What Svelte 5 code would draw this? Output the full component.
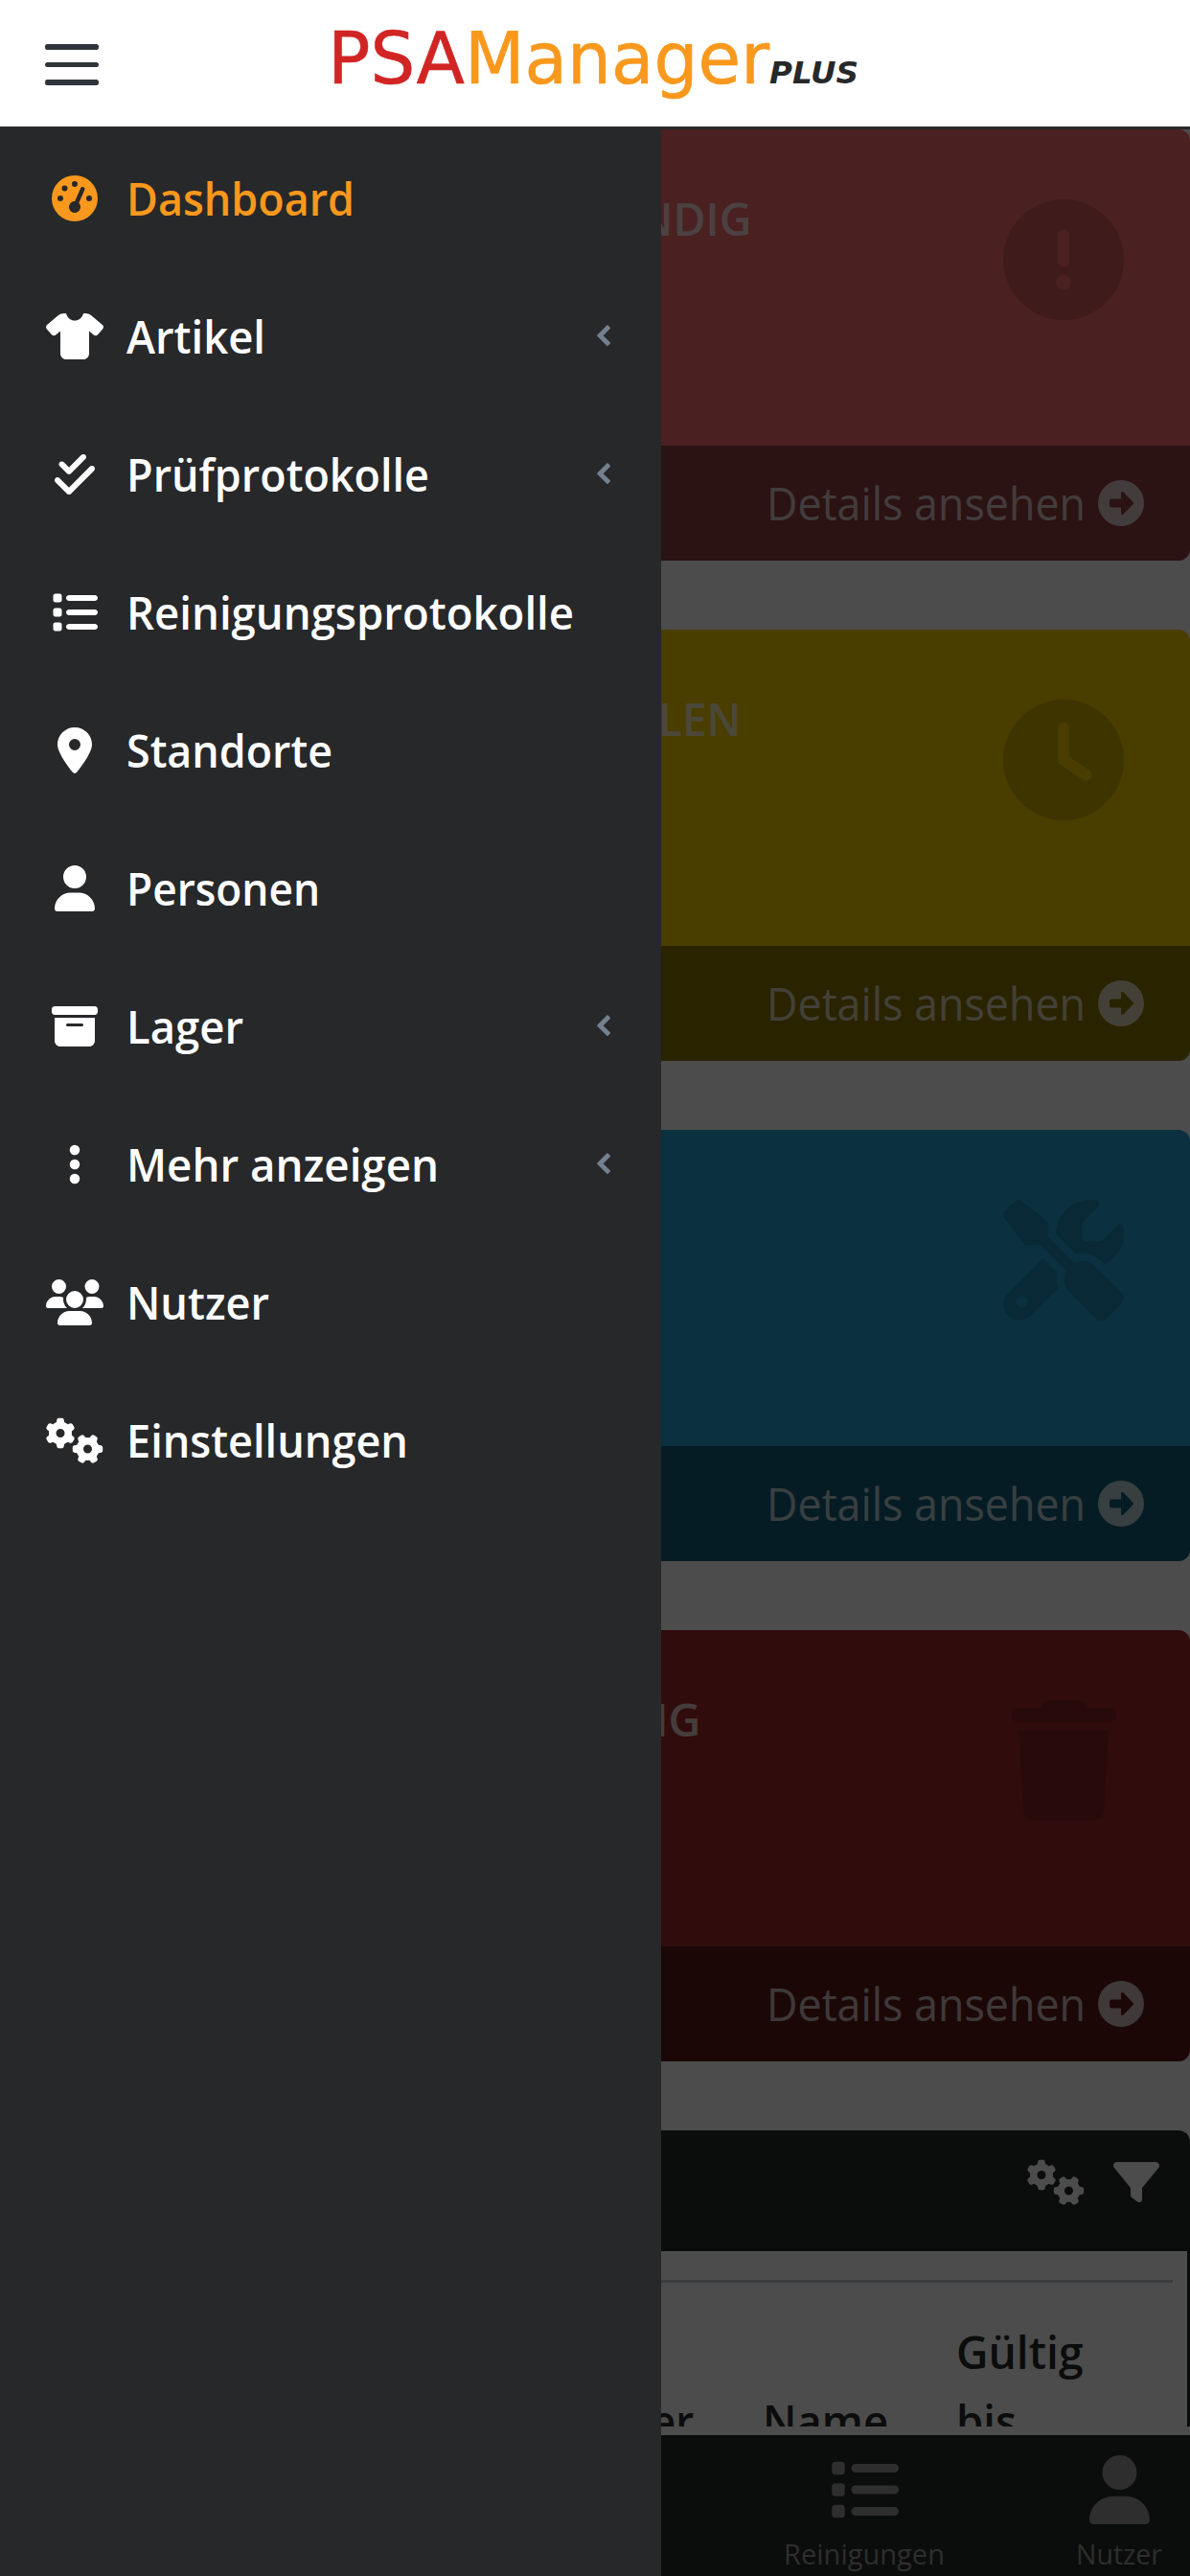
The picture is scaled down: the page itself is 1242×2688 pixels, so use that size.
<script lang="ts">
  interface NavItem {
    label: string;
    icon: string;
    width: number;
    active?: boolean;
    children?: boolean;
  }

  // [viewBox width, path], every icon is 512 units high
  const icons: Record<string, [number, string]> = {
    gauge: [512, 'M0 256a256 256 0 1 1 512 0A256 256 0 1 1 0 256zM288 96a32 32 0 1 0 -64 0 32 32 0 1 0 64 0zM256 416c35.3 0 64-28.7 64-64c0-17.4-6.9-33.1-18.1-44.6L366 161.7c5.3-12.1-.2-26.3-12.3-31.6s-26.3 .2-31.6 12.3L257.9 288c-.6 0-1.3 0-1.9 0c-35.3 0-64 28.7-64 64s28.7 64 64 64zM176 144a32 32 0 1 0 -64 0 32 32 0 1 0 64 0zM96 288a32 32 0 1 0 0-64 32 32 0 1 0 0 64zm352-32a32 32 0 1 0 -64 0 32 32 0 1 0 64 0z'],
    shirt: [640, 'M211.8 0c7.8 0 14.3 5.7 16.7 13.2C240.8 51.9 277.1 80 320 80s79.2-28.1 91.5-66.8C413.9 5.7 420.4 0 428.2 0h12.6c22.5 0 44.2 7.9 61.5 22.3L628.5 127.4c6.6 5.5 10.7 13.5 11.4 22.1s-2.1 17.1-7.8 23.6l-56 64c-11.4 13.1-31.2 14.6-44.6 3.5L480 197.7V448c0 35.3-28.7 64-64 64H224c-35.3 0-64-28.7-64-64V197.7l-51.5 42.9c-13.3 11.1-33.1 9.6-44.6-3.5l-56-64c-5.7-6.5-8.5-15-7.8-23.6s4.8-16.6 11.4-22.1L137.7 22.3C155 7.9 176.7 0 199.2 0h12.6z'],
    checkDouble: [448, 'M342.6 86.6c12.5-12.5 12.5-32.8 0-45.3s-32.8-12.5-45.3 0L160 178.7l-57.4-57.4c-12.5-12.5-32.8-12.5-45.3 0s-12.5 32.8 0 45.3l80 80c12.5 12.5 32.8 12.5 45.3 0l160-160zm96 128c12.5-12.5 12.5-32.8 0-45.3s-32.8-12.5-45.3 0L160 402.7 54.6 297.4c-12.5-12.5-32.8-12.5-45.3 0s-12.5 32.8 0 45.3l128 128c12.5 12.5 32.8 12.5 45.3 0l256-256z'],
    list: [512, 'M40 48C26.7 48 16 58.7 16 72v48c0 13.3 10.7 24 24 24H88c13.3 0 24-10.7 24-24V72c0-13.3-10.7-24-24-24H40zM192 64c-17.7 0-32 14.3-32 32s14.3 32 32 32H480c17.7 0 32-14.3 32-32s-14.3-32-32-32H192zm0 160c-17.7 0-32 14.3-32 32s14.3 32 32 32H480c17.7 0 32-14.3 32-32s-14.3-32-32-32H192zm0 160c-17.7 0-32 14.3-32 32s14.3 32 32 32H480c17.7 0 32-14.3 32-32s-14.3-32-32-32H192zM16 232v48c0 13.3 10.7 24 24 24H88c13.3 0 24-10.7 24-24V232c0-13.3-10.7-24-24-24H40c-13.3 0-24 10.7-24 24zM40 368c-13.3 0-24 10.7-24 24v48c0 13.3 10.7 24 24 24H88c13.3 0 24-10.7 24-24V392c0-13.3-10.7-24-24-24H40z'],
    location: [384, 'M215.7 499.2C267 435 384 279.4 384 192C384 86 298 0 192 0S0 86 0 192c0 87.4 117 243 168.3 307.2c12.3 15.3 35.1 15.3 47.4 0zM192 128a64 64 0 1 1 0 128 64 64 0 1 1 0-128z'],
    user: [448, 'M224 256A128 128 0 1 0 224 0a128 128 0 1 0 0 256zm-45.7 48C79.8 304 0 383.8 0 482.3C0 498.7 13.3 512 29.7 512H418.3c16.4 0 29.7-13.3 29.7-29.7C448 383.8 368.2 304 269.7 304H178.3z'],
    archive: [512, 'M32 32H480c17.7 0 32 14.3 32 32V96c0 17.7-14.3 32-32 32H32C14.3 128 0 113.7 0 96V64C0 46.3 14.3 32 32 32zm0 128H480V416c0 35.3-28.7 64-64 64H96c-35.3 0-64-28.7-64-64V160zm128 80c0 8.8 7.2 16 16 16H336c8.8 0 16-7.2 16-16s-7.2-16-16-16H176c-8.8 0-16 7.2-16 16z'],
    ellipsis: [128, 'M64 360a56 56 0 1 0 0 112 56 56 0 1 0 0-112zm0-160a56 56 0 1 0 0 112 56 56 0 1 0 0-112zM120 96A56 56 0 1 0 8 96a56 56 0 1 0 112 0z'],
    users: [640, 'M144 0a80 80 0 1 1 0 160A80 80 0 1 1 144 0zM512 0a80 80 0 1 1 0 160A80 80 0 1 1 512 0zM0 298.7C0 239.8 47.8 192 106.7 192h42.7c15.9 0 31 3.5 44.6 9.7c-1.3 7.2-1.9 14.7-1.9 22.3c0 38.2 16.8 72.5 43.3 96c-.2 0-.4 0-.7 0H21.3C9.6 320 0 310.4 0 298.7zM405.3 320c-.2 0-.4 0-.7 0c26.6-23.5 43.3-57.8 43.3-96c0-7.6-.7-15-1.9-22.3c13.6-6.3 28.7-9.7 44.6-9.7h42.7C592.2 192 640 239.8 640 298.7c0 11.8-9.6 21.3-21.3 21.3H405.3zM224 224a96 96 0 1 1 192 0 96 96 0 1 1 -192 0zM128 485.3C128 411.7 187.7 352 261.3 352H378.7C452.3 352 512 411.7 512 485.3c0 14.7-11.9 26.7-26.7 26.7H154.7c-14.7 0-26.7-11.9-26.7-26.7z'],
    gears: [640, 'M308.5 135.3c7.1-6.3 9.9-16.2 6.2-25c-2.3-5.3-4.8-10.5-7.6-15.5L304 89.4c-3-5-6.3-9.9-9.8-14.6c-5.7-7.6-15.7-10.1-24.7-7.1l-28.2 9.3c-10.7-8.8-23-16-36.2-20.9L199 27.1c-1.9-9.3-9.1-16.7-18.5-17.8C173.9 8.4 167.2 8 160.4 8h-.7c-6.8 0-13.5 .4-20.1 1.2c-9.4 1.1-16.6 8.6-18.5 17.8L115 56.1c-13.3 5-25.5 12.1-36.2 20.9L50.5 67.8c-9-3-19-.5-24.7 7.1c-3.5 4.7-6.8 9.6-9.9 14.6l-3 5.3c-2.8 5-5.3 10.2-7.6 15.6c-3.7 8.7-.9 18.6 6.2 25l22.2 19.8C32.6 161.9 32 168.9 32 176s.6 14.1 1.7 20.9L11.5 216.7c-7.1 6.3-9.9 16.2-6.2 25c2.3 5.3 4.8 10.5 7.6 15.6l3 5.2c3 5.1 6.3 9.9 9.9 14.6c5.7 7.6 15.7 10.1 24.7 7.1l28.2-9.3c10.7 8.8 23 16 36.2 20.9l6.1 29.1c1.9 9.3 9.1 16.7 18.5 17.8c6.7 .8 13.5 1.2 20.4 1.2s13.7-.4 20.4-1.2c9.4-1.1 16.6-8.6 18.5-17.8l6.1-29.1c13.3-5 25.5-12.1 36.2-20.9l28.2 9.3c9 3 19 .5 24.7-7.1c3.5-4.7 6.8-9.5 9.8-14.6l3.1-5.4c2.8-5 5.3-10.2 7.6-15.5c3.7-8.7 .9-18.6-6.2-25l-22.2-19.8c1.1-6.8 1.7-13.8 1.7-20.9s-.6-14.1-1.7-20.9l22.2-19.8zM112 176a48 48 0 1 1 96 0 48 48 0 1 1 -96 0zM504.7 500.5c6.3 7.1 16.2 9.9 25 6.2c5.3-2.3 10.5-4.8 15.5-7.6l5.4-3.1c5-3 9.9-6.3 14.6-9.8c7.6-5.7 10.1-15.7 7.1-24.7l-9.3-28.2c8.8-10.7 16-23 20.9-36.2l29.1-6.1c9.3-1.9 16.7-9.1 17.8-18.5c.8-6.7 1.2-13.5 1.2-20.4s-.4-13.7-1.2-20.4c-1.1-9.4-8.6-16.6-17.8-18.5L583.9 307c-5-13.3-12.1-25.5-20.9-36.2l9.3-28.2c3-9 .5-19-7.1-24.7c-4.7-3.5-9.6-6.8-14.6-9.9l-5.3-3c-5-2.8-10.2-5.3-15.6-7.6c-8.7-3.7-18.6-.9-25 6.2l-19.8 22.2c-6.8-1.1-13.8-1.7-20.9-1.7s-14.1 .6-20.9 1.7l-19.8-22.2c-6.3-7.1-16.2-9.9-25-6.2c-5.3 2.3-10.5 4.8-15.6 7.6l-5.2 3c-5.1 3-9.9 6.3-14.6 9.9c-7.6 5.7-10.1 15.7-7.1 24.7l9.3 28.2c-8.8 10.7-16 23-20.9 36.2L315.1 313c-9.3 1.9-16.7 9.1-17.8 18.5c-.8 6.7-1.2 13.5-1.2 20.4s.4 13.7 1.2 20.4c1.1 9.4 8.6 16.6 17.8 18.5l29.1 6.1c5 13.3 12.1 25.5 20.9 36.2l-9.3 28.2c-3 9-.5 19 7.1 24.7c4.7 3.5 9.5 6.8 14.6 9.8l5.4 3.1c5 2.8 10.2 5.3 15.5 7.6c8.7 3.7 18.6 .9 25-6.2l19.8-22.2c6.8 1.1 13.8 1.7 20.9 1.7s14.1-.6 20.9-1.7l19.8 22.2zM464 304a48 48 0 1 1 0 96 48 48 0 1 1 0-96z'],
    exclamation: [512, 'M256 512A256 256 0 1 0 256 0a256 256 0 1 0 0 512zm0-384c13.3 0 24 10.7 24 24V264c0 13.3-10.7 24-24 24s-24-10.7-24-24V152c0-13.3 10.7-24 24-24zM224 352a32 32 0 1 1 64 0 32 32 0 1 1 -64 0z'],
    clock: [512, 'M256 0a256 256 0 1 1 0 512A256 256 0 1 1 256 0zM232 120V256c0 8 4 15.5 10.7 20l96 64c11 7.4 25.9 4.4 33.3-6.7s4.4-25.9-6.7-33.3L280 243.2V120c0-13.3-10.7-24-24-24s-24 10.7-24 24z'],
    tools: [512, 'M78.6 5C69.1-2.4 55.6-1.5 47 7L7 47c-8.5 8.5-9.4 22-2.1 31.6l80 104c4.5 5.9 11.6 9.4 19 9.4h54.1l109 109c-14.7 29-10 65.4 14.3 89.6l112 112c12.5 12.5 32.8 12.5 45.3 0l64-64c12.5-12.5 12.5-32.8 0-45.3l-112-112c-24.2-24.2-60.6-29-89.6-14.3l-109-109V104c0-7.5-3.5-14.5-9.4-19L78.6 5zM19.9 396.1C7.2 408.8 0 426.1 0 444.1C0 481.6 30.4 512 67.9 512c18 0 35.3-7.2 48-19.9L233.7 374.3c-7.8-20.9-9-43.6-3.6-65.1l-61.7-61.7L19.9 396.1zM512 144c0-10.5-1.1-20.7-3.2-30.5c-2.4-11.2-16.1-14.1-24.2-6l-63.9 63.9c-3 3-7.1 4.7-11.3 4.7H352c-8.8 0-16-7.2-16-16V102.6c0-4.2 1.7-8.3 4.7-11.3l63.9-63.9c8.1-8.1 5.2-21.8-6-24.2C388.7 1.1 378.5 0 368 0C288.5 0 224 64.5 224 144l0 .8 85.3 85.3c36-9.1 75.8 .5 104 28.7L429 274.5c49-23 83-72.8 83-130.5zM56 432a24 24 0 1 1 48 0 24 24 0 1 1 -48 0z'],
    trash: [448, 'M135.2 17.7L128 32H32C14.3 32 0 46.3 0 64S14.3 96 32 96H416c17.7 0 32-14.3 32-32s-14.3-32-32-32H320l-7.2-14.3C307.4 6.8 296.3 0 284.2 0H163.8c-12.1 0-23.2 6.8-28.6 17.7zM416 128H32L53.2 467c1.6 25.3 22.6 45 47.9 45H346.9c25.3 0 46.3-19.7 47.9-45L416 128z'],
    circleRight: [512, 'M0 256a256 256 0 1 0 512 0A256 256 0 1 0 0 256zM390.6 244.7c6.2 6.2 6.2 16.4 0 22.6l-107.2 112c-4.6 4.6-11.5 5.9-17.5 3.5s-9.9-8.3-9.9-14.8v-64H152c-13.3 0-24-10.7-24-24v-48c0-13.3 10.7-24 24-24h104v-64c0-6.5 3.9-12.3 9.9-14.8s12.9-1.1 17.5 3.5z'],
    filter: [512, 'M3.9 54.9C10.5 40.9 24.5 32 40 32H472c15.5 0 29.5 8.9 36.1 22.9s4.6 30.5-5.2 42.5L320 320.9V448c0 12.1-6.8 23.2-17.7 28.6s-23.8 4.3-33.5-3l-64-48c-8.1-6-12.8-15.5-12.8-25.6V320.9L9 97.3C-.7 85.4-2.8 68.8 3.9 54.9z'],
  };

  const navItems: NavItem[] = [
    { label: 'Dashboard', icon: 'gauge', width: 238, active: true },
    { label: 'Artikel', icon: 'shirt', width: 145, children: true },
    { label: 'Prüfprotokolle', icon: 'checkDouble', width: 316, children: true },
    { label: 'Reinigungsprotokolle', icon: 'list', width: 467 },
    { label: 'Standorte', icon: 'location', width: 215 },
    { label: 'Personen', icon: 'user', width: 202 },
    { label: 'Lager', icon: 'archive', width: 122, children: true },
    { label: 'Mehr anzeigen', icon: 'ellipsis', width: 326, children: true },
    { label: 'Nutzer', icon: 'users', width: 149 },
    { label: 'Einstellungen', icon: 'gears', width: 294 },
  ];

  const cards = [
    { tone: 'danger', icon: 'exclamation', title: 'NDIG', start: 666, width: 118.5 },
    { tone: 'warning', icon: 'clock', title: 'LEN', start: 687, width: 86.5 },
    { tone: 'info', icon: 'tools', title: '', start: 0, width: 0 },
    { tone: 'dark-danger', icon: 'trash', title: 'NG', start: 661, width: 70.5 },
  ];

  let sidebarOpen = $state(true);
</script>

{#snippet icon(name: string, size: number)}
  <svg
    class="icon"
    width={(icons[name][0] / 512) * size}
    height={size}
    viewBox="0 0 {icons[name][0]} 512"
    aria-hidden="true"
  >
    <path fill-rule="evenodd" d={icons[name][1]} />
  </svg>
{/snippet}

{#snippet text(value: string, width: number, size = 47, height = 72)}
  <svg class="text" {width} {height}>
    <text x="0" y={height * 0.75} font-size={size} textLength={width} lengthAdjust="spacingAndGlyphs">{value}</text>
  </svg>
{/snippet}

<div class="app">
  <header class="header">
    <button class="toggler" aria-label="Menü" onclick={() => (sidebarOpen = !sidebarOpen)}>
      <span></span>
      <span></span>
      <span></span>
    </button>
    <svg class="logo" width="560" height="100">
      <text class="logo-psa" x="0" y="74" font-size="74" textLength="143" lengthAdjust="spacingAndGlyphs">PSA</text>
      <text class="logo-manager" x="143" y="74" font-size="74" textLength="318" lengthAdjust="spacingAndGlyphs">Manager</text>
      <text class="logo-plus" x="461" y="74" font-size="32" textLength="93" lengthAdjust="spacingAndGlyphs">PLUS</text>
    </svg>
  </header>

  <div class="body">
    <main class="main">
      {#each cards as card}
        <section class="card {card.tone}">
          <div class="card-body">
            <div class="card-title" style="padding-left: {card.start}px">
              {#if card.title}
                {@render text(card.title, card.width)}
              {/if}
            </div>
            <div class="card-icon">{@render icon(card.icon, 126)}</div>
          </div>
          <div class="card-footer">
            {@render text('Details ansehen', 333)}
            {@render icon('circleRight', 48)}
          </div>
        </section>
      {/each}

      <section class="table-card">
        <div class="table-header">
          {@render icon('gears', 48)}
          {@render icon('filter', 48)}
        </div>
        <hr />
        <div class="columns">
          <div>{@render text('er', 44)}</div>
          <div>{@render text('Name', 131)}</div>
          <div>
            {@render text('Gültig', 132.5)}
            {@render text('bis', 63)}
          </div>
        </div>
      </section>
    </main>

    <nav class="bottom-nav">
      <div class="tab">
        {@render icon('list', 72)}
        {@render text('Reinigungen', 168, 29.5, 45)}
      </div>
      <div class="tab">
        {@render icon('user', 72)}
        {@render text('Nutzer', 90, 29.5, 45)}
      </div>
    </nav>

    {#if sidebarOpen}
      <div class="backdrop"></div>
      <aside class="sidebar">
        {#each navItems as item}
          <div class="nav-item" class:active={item.active}>
            <span class="nav-icon">{@render icon(item.icon, 48)}</span>
            {@render text(item.label, item.width)}
            {#if item.children}
              <svg class="chevron" width="19" height="24" viewBox="0 0 11 14">
                <path d="M9.148 2.352l-4.148 4.148 4.148 4.148q0.148 0.148 0.148 0.352t-0.148 0.352l-1.297 1.297q-0.148 0.148-0.352 0.148t-0.352-0.148l-5.797-5.797q-0.148-0.148-0.148-0.352t0.148-0.352l5.797-5.797q0.148-0.148 0.352-0.148t0.352 0.148l1.297 1.297q0.148 0.148 0.148 0.352t-0.148 0.352z" />
              </svg>
            {/if}
          </div>
        {/each}
      </aside>
    {/if}
  </div>
</div>

<style>
  :global(body) {
    margin: 0;
  }
  .app {
    display: flex;
    flex-direction: column;
    width: 1242px;
    height: 2688px;
    overflow: hidden;
    background: #fff;
    font-family: 'Segoe UI', 'Open Sans', 'Noto Sans', sans-serif;
  }
  .icon,
  .text {
    display: block;
    flex-shrink: 0;
    fill: currentColor;
  }
  .text {
    overflow: visible;
  }

  .header {
    display: flex;
    align-items: center;
    box-sizing: border-box;
    height: 135px;
    flex-shrink: 0;
    padding-left: 47px;
    border-bottom: 3px solid #27282a;
    background: #fff;
  }
  .toggler {
    display: flex;
    flex-direction: column;
    gap: 13px;
    width: 56px;
    margin-top: 3px;
    padding: 0;
    border: 0;
    background: none;
  }
  .toggler span {
    height: 5.5px;
    border-radius: 2.5px;
    background: #2f353a;
  }
  .logo {
    margin: -6px 0 0 239px;
    overflow: visible;
    font-family: Verdana, 'DejaVu Sans', sans-serif;
  }
  .logo-psa {
    fill: #d12525;
    stroke: #d12525;
    stroke-width: 0.6;
  }
  .logo-manager {
    fill: #f8981d;
    stroke: #f8981d;
    stroke-width: 0.6;
  }
  .logo-plus {
    fill: #27282a;
    font-weight: 700;
    font-style: italic;
  }

  .body {
    position: relative;
    display: flex;
    flex-direction: column;
    flex: 1;
    min-height: 0;
  }
  .main {
    display: flex;
    flex-direction: column;
    gap: 72px;
    height: 2397px;
    overflow: hidden;
  }
  .card {
    flex-shrink: 0;
    overflow: hidden;
    border-radius: 12px;
  }
  .card-body {
    display: flex;
    justify-content: space-between;
    box-sizing: border-box;
    height: 330px;
    padding: 57px 69px 0 0;
  }
  .card-title {
    color: rgba(255, 255, 255, 0.75);
    font-weight: 600;
  }
  .card-icon {
    display: flex;
    justify-content: center;
    width: 126px;
    padding-top: 16px;
    color: rgba(0, 0, 0, 0.15);
  }
  .card-footer {
    display: flex;
    align-items: center;
    justify-content: flex-end;
    gap: 13px;
    height: 120px;
    padding-right: 48px;
    background: rgba(0, 0, 0, 0.42);
    color: rgba(255, 255, 255, 0.72);
  }
  .danger {
    background: #f86c6e;
  }
  .warning {
    background: #f4cd00;
  }
  .info {
    background: #25a4d5;
  }
  .dark-danger {
    background: #a32b2b;
  }

  .table-card {
    flex-shrink: 0;
    box-sizing: border-box;
    height: 480px;
    border: 3px solid #27282a;
    border-radius: 12px;
    color: #27282a;
  }
  .table-header {
    display: flex;
    align-items: flex-start;
    justify-content: flex-end;
    gap: 30px;
    box-sizing: border-box;
    height: 123px;
    padding: 27px 29px 0 0;
    background: #27282a;
    color: #fff;
  }
  hr {
    height: 3px;
    margin: 30px 15px 36px;
    border: 0;
    background: #c8ccd0;
  }
  .columns {
    display: grid;
    grid-template-columns: 116px 202px 1fr;
    align-items: end;
    padding-left: 677px;
    font-weight: 600;
  }

  .bottom-nav {
    display: flex;
    justify-content: flex-end;
    gap: 137px;
    box-sizing: border-box;
    height: 147px;
    margin-top: 9px;
    padding: 21px 29px 0 0;
    background: #27282a;
    color: #999;
  }
  .tab {
    display: flex;
    flex-direction: column;
    align-items: center;
    gap: 8px;
  }

  .backdrop {
    position: absolute;
    inset: 0;
    background: rgba(0, 0, 0, 0.7);
  }
  .sidebar {
    position: absolute;
    top: 0;
    bottom: 0;
    left: 0;
    width: 690px;
    background: #27282a;
    color: #fff;
    font-weight: 600;
  }
  .nav-item {
    display: flex;
    align-items: center;
    box-sizing: border-box;
    height: 144px;
    padding: 0 50px 0 48px;
  }
  .nav-item.active {
    color: #f8981d;
  }
  .nav-icon {
    display: flex;
    justify-content: center;
    width: 60px;
    margin-right: 24px;
  }
  .chevron {
    margin-left: auto;
    fill: #73818f;
  }
</style>
